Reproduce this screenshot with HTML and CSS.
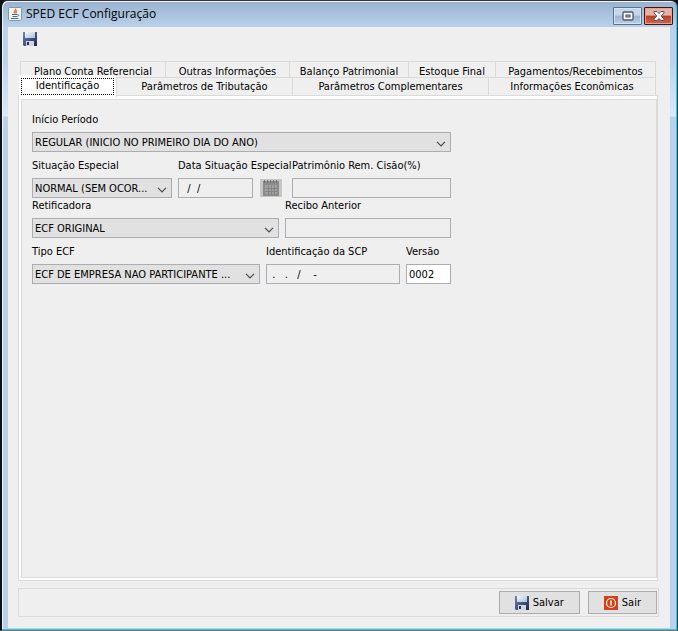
FILE: index.html
```html
<!DOCTYPE html>
<html lang="pt-BR">
<head>
<meta charset="utf-8">
<title>SPED ECF Configuração</title>
<link rel="stylesheet" href="styles.css">
</head>
<body>
<svg width="0" height="0" class="defs" aria-hidden="true">
  <defs>
    <linearGradient id="disk" x1="0" y1="0" x2="1" y2="1"><stop offset="0" stop-color="#7583b4"/><stop offset="1" stop-color="#1b2550"/></linearGradient>
    <linearGradient id="paper" x1="0" y1="0" x2="1" y2="1"><stop offset="0" stop-color="#f4f8fc"/><stop offset="1" stop-color="#a9bedb"/></linearGradient>
    <symbol id="save" viewBox="0 0 14 14">
      <path d="M0 0h14v14H1L0 13z" fill="url(#disk)"/>
      <path d="M2 0h10v6H2z" fill="url(#paper)"/>
      <path d="M3 9h8v5H3z" fill="#cdd6e4"/>
      <path d="M4 10h2v3H4z" fill="#25305c"/>
    </symbol>
    <symbol id="chevron" viewBox="0 0 10 6"><path d="M1 .8l4 4 4-4" fill="none" stroke="#4b4b4b" stroke-width="1.2"/></symbol>
  </defs>
</svg>
<div class="window">
  <header class="titlebar">
    <svg class="java" viewBox="0 0 14 14" width="14" height="14" aria-hidden="true">
      <rect x=".5" y=".5" width="13" height="13" rx="1" fill="#f2f4f6" stroke="#8496ab"/>
      <path d="M7.500 1.500c1.200 1.500-2.500 2.500-1 5M9 3.500c-1.500 1-1.500 1.500-.8 3" fill="none" stroke="#e5772d" stroke-width="1.400"/>
      <path d="M4 7.500h5.500M4.500 9.500h4.500M3 11.500h7.500M9.500 7.800c2-.4 1.500 1.500 0 1.700" fill="none" stroke="#446b96"/>
    </svg>
    <h1>SPED ECF Configuração</h1>
    <button class="caption" aria-label="Maximizar">
      <svg viewBox="0 0 12 10" width="12" height="10"><rect x="1" y="1" width="10" height="8" rx="1" fill="#f4f6f9" stroke="#535766" stroke-width="1.300"/><rect x="4" y="4" width="4" height="2" fill="#9fb8d3" stroke="#535766"/></svg>
    </button>
    <button class="caption close" aria-label="Fechar">
      <svg viewBox="0 0 12 10" width="12" height="10"><path d="M1 .5h3l2 2 2-2h3v1.500L8.200 5 11 8v1.500H8l-2-2-2 2H1V8l2.800-3L1 2z" fill="#f7f7f7" stroke="#535766"/></svg>
    </button>
  </header>
  <main class="client">
    <div class="toolbar">
      <button class="tool" aria-label="Salvar"><svg width="14" height="14"><use href="#save"/></svg></button>
    </div>
    <div class="tabs" role="tablist">
      <div class="tabrow back">
        <button role="tab">Plano Conta Referencial</button>
        <button role="tab">Outras Informações</button>
        <button role="tab">Balanço Patrimonial</button>
        <button role="tab">Estoque Final</button>
        <button role="tab">Pagamentos/Recebimentos</button>
      </div>
      <div class="tabrow front">
        <button role="tab" class="selected" aria-selected="true"><span>Identificação</span></button>
        <button role="tab">Parâmetros de Tributação</button>
        <button role="tab">Parâmetros Complementares</button>
        <button role="tab">Informações Econômicas</button>
      </div>
    </div>
    <section class="pane" role="tabpanel">
      <form class="form">
        <div class="row">
          <div class="field"><label for="inicio">Início Período</label>
            <div class="combo"><select id="inicio"><option>REGULAR (INICIO NO PRIMEIRO DIA DO ANO)</option></select><svg width="10" height="6"><use href="#chevron"/></svg></div></div>
        </div>
        <div class="row situation">
          <div class="field"><label for="situacao">Situação Especial</label>
            <div class="combo"><select id="situacao"><option>NORMAL (SEM OCOR...</option></select><svg width="10" height="6"><use href="#chevron"/></svg></div></div>
          <div class="field"><label for="data">Data Situação Especial</label>
            <div class="date"><input id="data" class="mask" value="  /  /" readonly>
              <button type="button" class="calendar" aria-label="Calendário" disabled>
                <svg viewBox="0 0 16 16" width="16" height="16"><path d="M0 1h16v15H0z" fill="#8b8b8b"/><path d="M1 0h1v3H1zM4 0h1v3H4zM7 0h1v3H7zM10 0h1v3h-1zM13 0h1v3h-1z" fill="#737373"/><path d="M2 5h12v9H2z" fill="#a0a0a0"/><path d="M2 8h12M2 11h12M5 5v9M8 5v9M11 5v9" transform="translate(.5 .5)" stroke="#858585"/></svg>
              </button></div></div>
          <div class="field"><label for="patrimonio">Patrimônio Rem. Cisão(%)</label><input id="patrimonio" readonly></div>
        </div>
        <div class="row receipt">
          <div class="field"><label for="retificadora">Retificadora</label>
            <div class="combo"><select id="retificadora"><option>ECF ORIGINAL</option></select><svg width="10" height="6"><use href="#chevron"/></svg></div></div>
          <div class="field"><label for="recibo">Recibo Anterior</label><input id="recibo" readonly></div>
        </div>
        <div class="row kind">
          <div class="field"><label for="tipo">Tipo ECF</label>
            <div class="combo"><select id="tipo"><option>ECF DE EMPRESA NAO PARTICIPANTE ...</option></select><svg width="10" height="6"><use href="#chevron"/></svg></div></div>
          <div class="field"><label for="scp">Identificação da SCP</label><input id="scp" class="mask" value=" .   .   /    -" readonly></div>
          <div class="field"><label for="versao">Versão</label><input id="versao" class="editable" value="0002"></div>
        </div>
      </form>
    </section>
    <footer class="actions">
      <button class="action"><svg width="14" height="14"><use href="#save"/></svg>Salvar</button>
      <button class="action"><svg viewBox="0 0 14 14" width="14" height="14"><rect width="14" height="14" fill="#e03a12"/><rect x=".5" y=".5" width="13" height="13" fill="none" stroke="#c2482c"/><circle cx="7" cy="7" r="4.500" fill="none" stroke="#fff" stroke-width="1.200"/><path d="M7 4.500v5" stroke="#fff" stroke-width="1.500"/></svg>Sair</button>
    </footer>
  </main>
</div>
</body>
</html>
```
FILE: styles.css
```css
* { box-sizing: border-box; }

body {
  margin: 0;
  background: #101018;
  color: #000;
  font: 11px/16px "DejaVu Sans Condensed", "DejaVu Sans", sans-serif;
}

button, input, select { font: inherit; color: inherit; margin: 0; border-radius: 0; }
.defs { position: absolute; }

.window {
  display: flex;
  flex-direction: column;
  min-height: 100vh;
  padding: 0 7px 2px 6px;
  border-style: solid;
  border-width: 1px 1px 1px 2px;
  border-color: #35313a #1d4652 #777 #101018;
  border-radius: 7px 7px 0 0;
  background: linear-gradient(#98b2cf, #b9d1ea 26px, #bdd3ec 60px, #dbe8f6 115px, #b9d1ea 116px);
  box-shadow: inset -1px -1px #35c5e5, inset 1px 1px #eef4fa;
}

.titlebar {
  display: flex;
  align-items: center;
  height: 26px;
}
.java { margin-right: 4px; }
.titlebar h1 {
  flex: 1;
  margin: 0;
  font: 12px/16px "Open Sans", sans-serif;
}
.caption {
  display: flex;
  align-items: center;
  justify-content: center;
  width: 29px;
  height: 18px;
  margin: 3px 0 0 2px;
  padding: 0;
  border: 1px solid #5c7190;
  border-radius: 1px;
  background: linear-gradient(#c4d6ea 45%, #9bb4d0 50%, #bad0e9);
  box-shadow: inset 0 0 0 1px #d5e3f2;
}
.close {
  margin-right: -3px;
  border-color: #43151a;
  background: linear-gradient(#e8b1a2 45%, #bc3c22 50%, #cf6a4d);
  box-shadow: inset 0 0 0 1px #e3a292;
}

.client {
  flex: 1;
  display: flex;
  flex-direction: column;
  padding: 5px 11px 11px 10px;
  background: #efefef;
}
.toolbar { height: 29px; padding-left: 5px; }
.tool { padding: 0; border: 0; background: none; }
.tool svg { display: block; }

.tabs { margin: 0 3px 0 2px; }
.tabrow { display: grid; border-left: 1px solid #dadada; }
.tabrow button {
  padding: 0;
  border: solid #dadada;
  border-width: 1px 1px 0 0;
  background: #efefef;
  white-space: nowrap;
}
.back { height: 16px; grid-template-columns: 145fr 124fr 119fr 87fr 160fr; }
.back button { padding-top: 2px; }
.front { height: 18px; grid-template-columns: 96fr 176fr 196fr 167fr; }
.front .selected {
  z-index: 1;
  margin: -2px 0 -1px -2px;
  padding: 3px 2px 2px;
  border-width: 0 1px 0 0;
  background: #fff;
}
.selected span {
  display: block;
  height: 17px;
  border: 1px dotted #000;
  line-height: 13px;
}

.pane {
  flex: 1;
  margin-right: 1px;
  padding: 16px 10px 12px 13px;
  border: 1px solid #dadada;
  box-shadow: inset 0 3px #fff, inset 2px 0 #fff, inset 0 -2px #fff, inset 3px 4px #dadada, inset -1px -3px #dadada;
}
.form {
  display: flex;
  flex-direction: column;
  gap: 6px;
  width: 66%;
  min-width: 419px;
}
.row { display: grid; grid-template-columns: 1fr; column-gap: 6px; }
.situation { grid-template-columns: 140fr 108fr 159fr; }
.receipt { grid-template-columns: 247fr 166fr; margin-top: -6px; }
.kind { grid-template-columns: 228fr 134fr 45fr; }
.field { display: flex; flex-direction: column; gap: 4px; min-width: 0; }
.field label { white-space: nowrap; }
.field input {
  width: 100%;
  height: 20px;
  padding: 0 2px;
  border: 1px solid #abadb3;
  background: #efefef;
}
.field .mask { padding-left: 2px; }
.field .editable { background: #fff; }
.combo { position: relative; }
.combo select {
  display: block;
  width: 100%;
  height: 20px;
  padding: 1px 20px 0 2px;
  border: 1px solid #abadb3;
  background: #e1e1e1;
  appearance: none;
}
.combo svg { position: absolute; right: 5px; top: 9px; pointer-events: none; }
.date { display: flex; align-items: center; gap: 7px; }
.date input { flex: 1; min-width: 0; }
.calendar {
  display: flex;
  align-items: center;
  justify-content: center;
  width: 22px;
  height: 18px;
  margin-right: 4px;
  padding: 0;
  border: 0;
  background: #c6c6c6;
}

.actions {
  display: flex;
  justify-content: flex-end;
  gap: 8px;
  margin-top: 7px;
  padding: 2px 1px;
  border: 1px solid #dadada;
}
.action {
  display: flex;
  align-items: center;
  gap: 4px;
  height: 23px;
  padding: 0 15px;
  border: 1px solid #adadad;
  background: #e1e1e1;
}
```
